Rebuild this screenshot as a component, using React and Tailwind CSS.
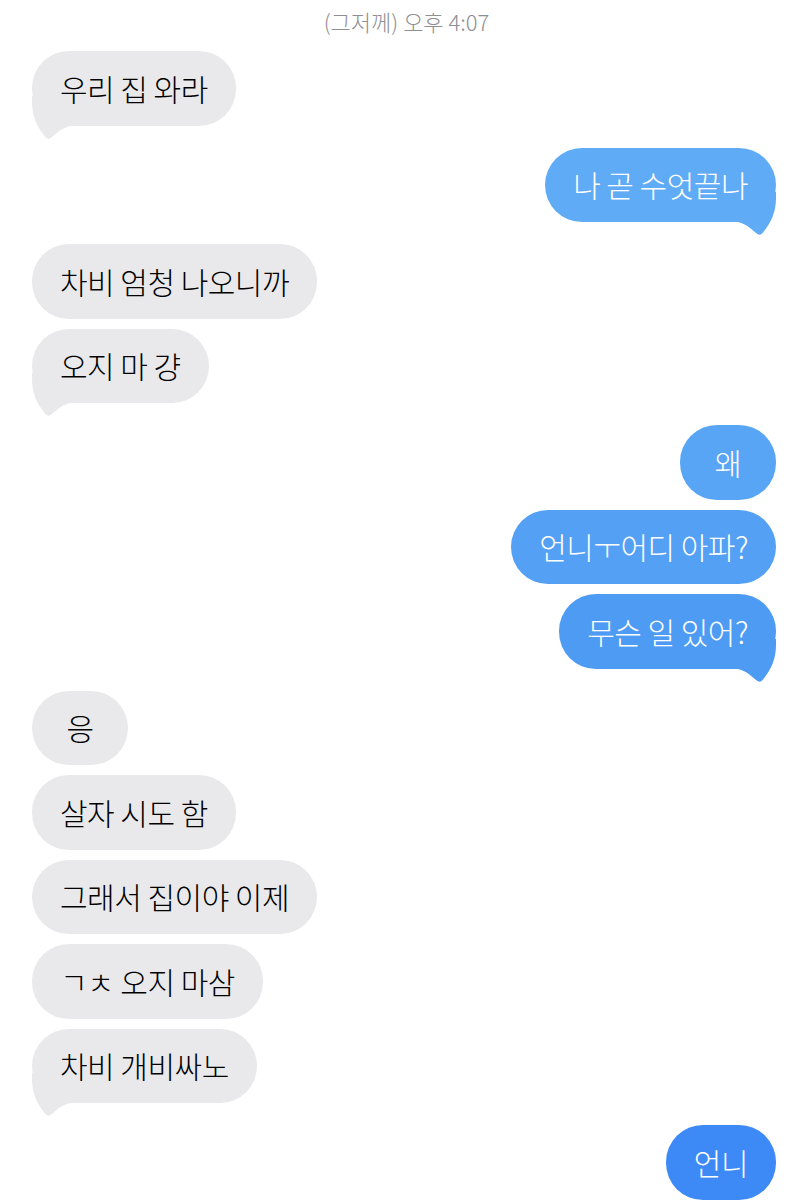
import React from 'react';

const font = { fontFamily: '"Noto Sans CJK KR", "Noto Sans", sans-serif' };

// message groups, top to bottom
const groups = [
  { me: false, items: [{ text: '우리 집 와라' }] },
  { me: true, items: [{ text: '나 곧 수엇끝나', bg: 'bg-[#5fabf5]', fill: 'fill-[#5fabf5]' }] },
  { me: false, items: [{ text: '차비 엄청 나오니까' }, { text: '오지 마 걍' }] },
  {
    me: true,
    items: [
      { text: '왜', bg: 'bg-[#59a5f5]' },
      { text: '언니ㅜ어디 아파?', bg: 'bg-[#54a0f5]' },
      { text: '무슨 일 있어?', bg: 'bg-[#4e9bf4]', fill: 'fill-[#4e9bf4]' },
    ],
  },
  {
    me: false,
    items: [
      { text: '응' },
      { text: '살자 시도 함' },
      { text: '그래서 집이야 이제' },
      { text: 'ㄱㅊ 오지 마삼' },
      { text: '차비 개비싸노' },
    ],
  },
  { me: true, items: [{ text: '언니', bg: 'bg-[#3d8af6]' }], noTail: true },
];

const Tail = ({ me, fill }) => (
  <svg
    width="44"
    height="44"
    viewBox="0 0 44 44"
    className={`absolute bottom-[-14px] ${me ? 'right-0 scale-x-[-1]' : 'left-0'}`}
  >
    <path
      d="M0 0 L0 6 C0 20 5 31 13 40.5 C14.5 42.5 16.5 43.5 18.5 42 C24 38 29 32 38 30 L38 0 Z"
      className={fill}
    />
  </svg>
);

const Bubble = ({ text, me, bg, fill, tail }) => (
  <div className={`flex ${me ? 'justify-end' : 'justify-start'}`}>
    <div
      className={`relative h-[74.5px] min-w-[96px] px-[28px] rounded-[37px] flex items-center justify-center text-[30px] font-light tracking-[-0.5px] ${me ? bg : 'bg-[#e9e9eb]'} ${me ? 'text-white' : 'text-black'}`}
    >
      {tail && <Tail me={me} fill={me ? fill : 'fill-[#e9e9eb]'} />}
      <span className="relative whitespace-nowrap">{text}</span>
    </div>
  </div>
);

export default function App() {
  return (
    <div className="w-[809px] h-[1200px] overflow-hidden bg-white pl-[32px] pr-[33px] pt-[7px]" style={font}>
      <div className="h-[28px] leading-[28px] text-center text-[22px] font-light text-[#8e8e93] mb-[16px] pl-[5px]">
        (그저께) 오후 4:07
      </div>
      <div className="flex flex-col gap-[22px]">
        {groups.map((g, gi) => (
          <div key={gi} className="flex flex-col gap-[10px]">
            {g.items.map((m, i) => (
              <Bubble
                key={i}
                text={m.text}
                me={g.me}
                bg={m.bg}
                fill={m.fill}
                tail={!g.noTail && i === g.items.length - 1}
              />
            ))}
          </div>
        ))}
      </div>
    </div>
  );
}
